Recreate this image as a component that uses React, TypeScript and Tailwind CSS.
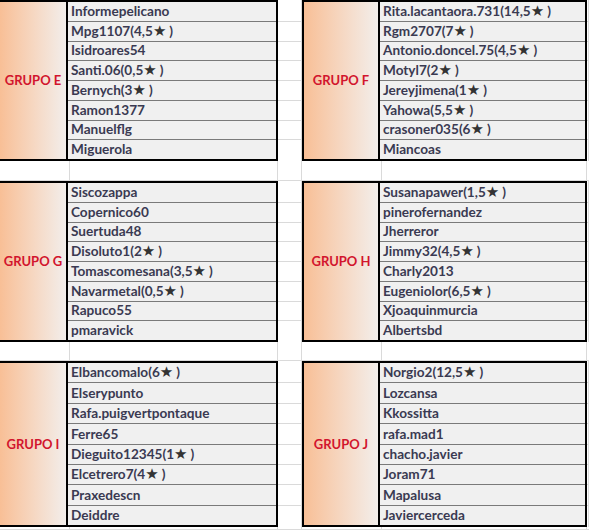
import React from "react";

type Entry = { n: string; s?: string };

const groups: { label: string; names: Entry[] }[] = [
  {
    label: "GRUPO E",
    names: [
      { n: "Informepelicano" },
      { n: "Mpg1107", s: "4,5" },
      { n: "Isidroares54" },
      { n: "Santi.06", s: "0,5" },
      { n: "Bernych", s: "3" },
      { n: "Ramon1377" },
      { n: "Manuelflg" },
      { n: "Miguerola" },
    ],
  },
  {
    label: "GRUPO F",
    names: [
      { n: "Rita.lacantaora.731", s: "14,5" },
      { n: "Rgm2707", s: "7" },
      { n: "Antonio.doncel.75", s: "4,5" },
      { n: "Motyl7", s: "2" },
      { n: "Jereyjimena", s: "1" },
      { n: "Yahowa", s: "5,5" },
      { n: "crasoner035", s: "6" },
      { n: "Miancoas" },
    ],
  },
  {
    label: "GRUPO G",
    names: [
      { n: "Siscozappa" },
      { n: "Copernico60" },
      { n: "Suertuda48" },
      { n: "Disoluto1", s: "2" },
      { n: "Tomascomesana", s: "3,5" },
      { n: "Navarmetal", s: "0,5" },
      { n: "Rapuco55" },
      { n: "pmaravick" },
    ],
  },
  {
    label: "GRUPO H",
    names: [
      { n: "Susanapawer", s: "1,5" },
      { n: "pinerofernandez" },
      { n: "Jherreror" },
      { n: "Jimmy32", s: "4,5" },
      { n: "Charly2013" },
      { n: "Eugeniolor", s: "6,5" },
      { n: "Xjoaquinmurcia" },
      { n: "Albertsbd" },
    ],
  },
  {
    label: "GRUPO I",
    names: [
      { n: "Elbancomalo", s: "6" },
      { n: "Elserypunto" },
      { n: "Rafa.puigvertpontaque" },
      { n: "Ferre65" },
      { n: "Dieguito12345", s: "1" },
      { n: "Elcetrero7", s: "4" },
      { n: "Praxedescn" },
      { n: "Deiddre" },
    ],
  },
  {
    label: "GRUPO J",
    names: [
      { n: "Norgio2", s: "12,5" },
      { n: "Lozcansa" },
      { n: "Kkossitta" },
      { n: "rafa.mad1" },
      { n: "chacho.javier" },
      { n: "Joram71" },
      { n: "Mapalusa" },
      { n: "Javiercerceda" },
    ],
  },
];

function Name({ e }: { e: Entry }) {
  return (
    <span className="whitespace-nowrap">
      {e.n}
      {e.s !== undefined && (
        <>
          ({e.s}
          <span className="font-['DejaVu_Sans',sans-serif] text-[15px] leading-[15px] text-[#333333]">★</span>
          <span className="ml-[3px]">)</span>
        </>
      )}
    </span>
  );
}

function Table({
  label,
  names,
  side,
}: {
  label: string;
  names: Entry[];
  side: "left" | "right";
}) {
  return (
    <div
      className={
        side === "left"
          ? "flex w-[278px] h-full border-2 border-l-0 border-black"
          : "flex w-[285px] h-full border-2 border-black"
      }
    >
      <div
        className={
          side === "left"
            ? "w-[68px] shrink-0 flex items-center justify-center bg-linear-to-r from-[#f8bf96] to-[#f2eeeb] border-r-2 border-black"
            : "w-[76px] shrink-0 flex items-center justify-center bg-linear-to-r from-[#f8bf96] to-[#f2eeeb] border-r-2 border-black"
        }
      >
        <span className="text-[13px] font-bold text-[#d2152d] font-['Lato',sans-serif] leading-none">
          {label}
        </span>
      </div>
      <div className="flex-1 flex flex-col bg-[#f0f0f0]">
        {names.map((e, i) => (
          <div
            key={i}
            className={
              i === 0
                ? "flex-1 flex items-end pl-[3px] pb-[2px] text-[13.6px] font-bold text-[#3a3a52] font-['Lato',sans-serif] leading-[15px]"
                : "flex-1 flex items-end pl-[3px] pb-[2px] text-[13.6px] font-bold text-[#3a3a52] font-['Lato',sans-serif] leading-[15px] border-t border-[#7a7a7a]"
            }
          >
            <Name e={e} />
          </div>
        ))}
      </div>
    </div>
  );
}

function GridCol({ w }: { w: string }) {
  return (
    <div className={`${w} h-full flex flex-col pt-[2px] pb-[2px] border-r border-[#dadada]`}>
      {Array.from({ length: 8 }).map((_, i) => (
        <div
          key={i}
          className={i === 0 ? "flex-1" : "flex-1 border-t border-[#dadada]"}
        />
      ))}
    </div>
  );
}

function Section({
  left,
  right,
  h,
}: {
  left: (typeof groups)[number];
  right: (typeof groups)[number];
  h: string;
}) {
  return (
    <div className={`flex ${h}`}>
      <Table label={left.label} names={left.names} side="left" />
      <GridCol w="w-[24px]" />
      <Table label={right.label} names={right.names} side="right" />
      <GridCol w="w-[2px]" />
    </div>
  );
}

function GapRow({ h }: { h: string }) {
  return (
    <div className={`flex ${h} border-b border-[#dadada]`}>
      <div className="w-[70px] border-r border-[#dadada]" />
      <div className="w-[208px] border-r border-[#dadada]" />
      <div className="w-[24px] border-r border-[#dadada]" />
      <div className="w-[80px] border-r border-[#dadada]" />
      <div className="w-[205px] border-r border-[#dadada]" />
      <div className="w-[2px]" />
    </div>
  );
}

export default function App() {
  return (
    <div className="w-[589px] h-[530px] bg-white overflow-hidden flex flex-col">
      <Section left={groups[0]} right={groups[1]} h="h-[161px]" />
      <GapRow h="h-[20px]" />
      <Section left={groups[2]} right={groups[3]} h="h-[161px]" />
      <GapRow h="h-[19px]" />
      <Section left={groups[4]} right={groups[5]} h="h-[166px]" />
      <GapRow h="h-[3px]" />
    </div>
  );
}
